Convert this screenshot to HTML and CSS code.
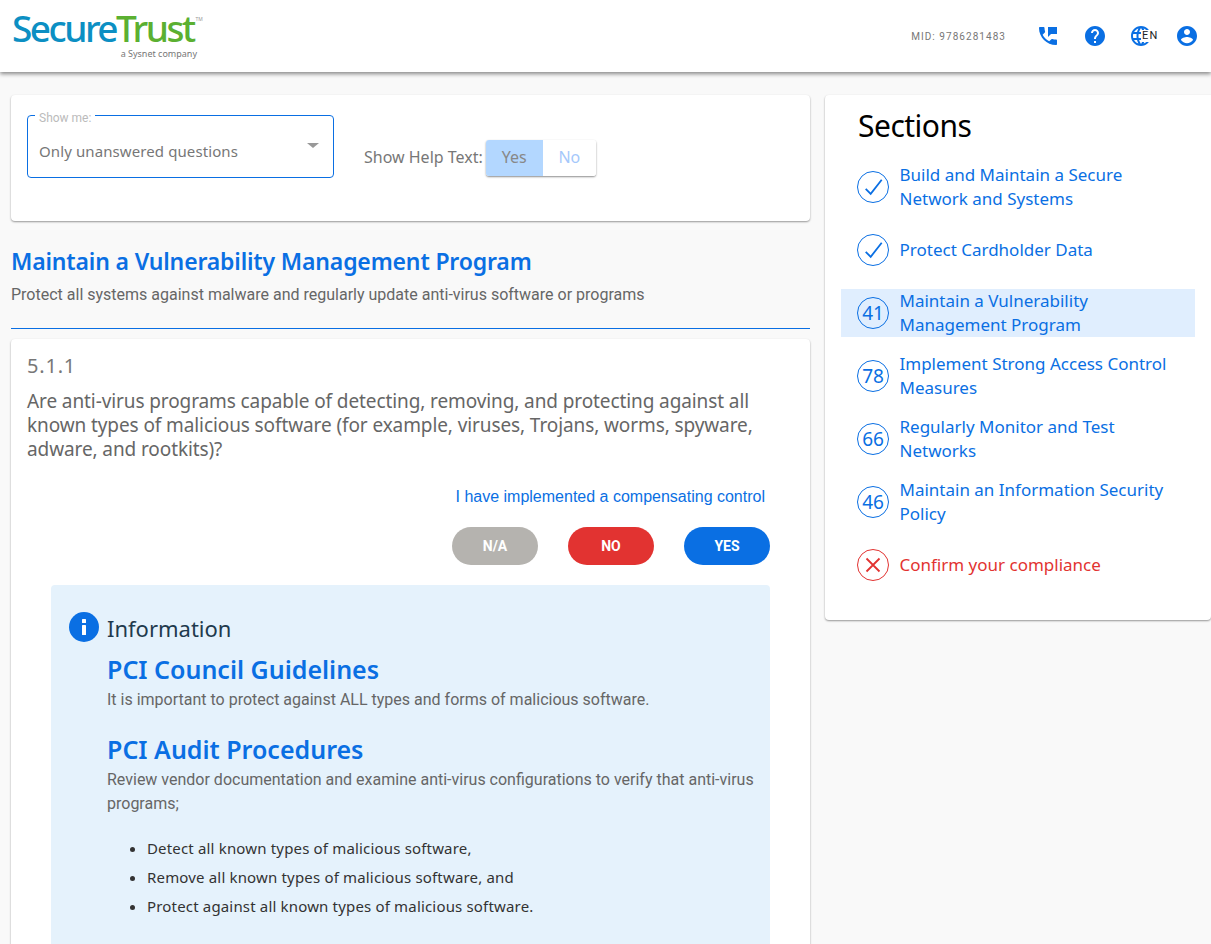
FILE: index.html
```html
<!DOCTYPE html>
<html lang="en">
<head>
<meta charset="utf-8">
<title>SecureTrust</title>
<link rel="stylesheet" href="styles.css">
</head>
<body>
<header class="topbar">
  <div class="logo">
    <div class="logo-word"><span class="logo-a">Secure</span><span class="logo-b">Trust</span><span class="logo-tm">TM</span></div>
    <div class="logo-sub">a Sysnet company</div>
  </div>
  <div class="top-actions">
    <span class="mid">MID: 9786281483</span>
    <svg class="ticon" viewBox="0 0 24 24"><path d="M20 15.5c-1.25 0-2.45-.2-3.57-.57-.35-.11-.74-.03-1.02.24l-2.2 2.2c-2.83-1.44-5.15-3.75-6.59-6.58l2.2-2.21c.28-.27.36-.66.25-1.01C8.7 6.45 8.5 5.25 8.5 4c0-.55-.45-1-1-1H4c-.55 0-1 .45-1 1 0 9.39 7.61 17 17 17 .55 0 1-.45 1-1v-3.5c0-.55-.45-1-1-1zM12 3v10l3-3h6V3h-9z"/></svg>
    <svg class="ticon ticon-tight" viewBox="0 0 24 24"><path d="M12 2C6.48 2 2 6.48 2 12s4.48 10 10 10 10-4.48 10-10S17.52 2 12 2zm1 17h-2v-2h2v2zm2.07-7.75l-.9.92C13.45 12.9 13 13.5 13 15h-2v-.5c0-1.1.45-2.1 1.17-2.83l1.24-1.26c.37-.36.59-.86.59-1.41 0-1.1-.9-2-2-2s-2 .9-2 2H8c0-2.21 1.79-4 4-4s4 1.79 4 4c0 .88-.36 1.68-.93 2.25z"/></svg>
    <div class="lang">
      <svg class="ticon" viewBox="0 0 24 24"><path d="M11.99 2C6.47 2 2 6.48 2 12s4.47 10 9.99 10C17.52 22 22 17.52 22 12S17.52 2 11.99 2zm6.93 6h-2.95c-.32-1.25-.78-2.45-1.38-3.56 1.84.63 3.37 1.91 4.33 3.56zM12 4.04c.83 1.2 1.48 2.53 1.91 3.96h-3.82c.43-1.43 1.08-2.76 1.91-3.96zM4.26 14C4.1 13.36 4 12.69 4 12s.1-1.36.26-2h3.38c-.08.66-.14 1.32-.14 2 0 .68.06 1.34.14 2H4.26zm.82 2h2.95c.32 1.25.78 2.45 1.38 3.56-1.84-.63-3.37-1.9-4.33-3.56zm2.95-8H5.08c.96-1.66 2.49-2.93 4.33-3.56C8.81 5.55 8.35 6.75 8.03 8zM12 19.96c-.83-1.2-1.48-2.53-1.91-3.96h3.82c-.43 1.43-1.08 2.76-1.91 3.96zM14.34 14H9.66c-.09-.66-.16-1.32-.16-2 0-.68.07-1.35.16-2h4.68c.09.65.16 1.32.16 2 0 .68-.07 1.34-.16 2zm.25 5.56c.6-1.11 1.06-2.31 1.38-3.56h2.95c-.96 1.65-2.49 2.93-4.33 3.56zM16.36 14c.08-.66.14-1.32.14-2 0-.68-.06-1.34-.14-2h3.38c.16.64.26 1.31.26 2s-.1 1.36-.26 2h-3.38z"/></svg>
      <span class="lang-code">EN</span>
    </div>
    <svg class="ticon" viewBox="0 0 24 24"><path d="M12 2C6.48 2 2 6.48 2 12s4.48 10 10 10 10-4.48 10-10S17.52 2 12 2zm0 3c1.66 0 3 1.34 3 3s-1.34 3-3 3-3-1.34-3-3 1.34-3 3-3zm0 14.2c-2.5 0-4.71-1.28-6-3.22.03-1.99 4-3.08 6-3.08 1.99 0 5.97 1.09 6 3.08-1.29 1.94-3.5 3.22-6 3.22z"/></svg>
  </div>
</header>

<main class="layout">
  <section class="col-left">
    <div class="card filter-card">
      <div class="select">
        <span class="select-label">Show me:</span>
        <span class="select-value">Only unanswered questions</span>
        <span class="select-arrow"></span>
      </div>
      <div class="help-toggle">
        <span class="help-label">Show Help Text:</span>
        <div class="toggle">
          <span class="toggle-on">Yes</span>
          <span class="toggle-off">No</span>
        </div>
      </div>
    </div>

    <h1 class="page-title">Maintain a Vulnerability Management Program</h1>
    <p class="page-sub">Protect all systems against malware and regularly update anti-virus software or programs</p>
    <hr class="rule">

    <article class="card question">
      <div class="q-num">5.1.1</div>
      <p class="q-text">Are anti-virus programs capable of detecting, removing, and protecting against all known types of malicious software (for example, viruses, Trojans, worms, spyware, adware, and rootkits)?</p>
      <div class="q-comp"><a class="comp-link">I have implemented a compensating control</a></div>
      <div class="q-buttons">
        <button class="btn btn-na">N/A</button>
        <button class="btn btn-no">NO</button>
        <button class="btn btn-yes">YES</button>
      </div>
      <div class="info">
        <div class="info-head">
          <svg class="info-icon" viewBox="0 0 30 30"><circle cx="15" cy="15" r="15"/><rect class="info-glyph" x="13" y="7" width="4" height="4" rx=".6"/><rect class="info-glyph" x="13" y="13" width="4" height="10" rx=".6"/></svg>
          <span class="info-title">Information</span>
        </div>
        <div class="info-body">
          <h2 class="info-h">PCI Council Guidelines</h2>
          <p class="info-p">It is important to protect against ALL types and forms of malicious software.</p>
          <h2 class="info-h info-h2">PCI Audit Procedures</h2>
          <p class="info-p">Review vendor documentation and examine anti-virus configurations to verify that anti-virus programs;</p>
          <ul class="info-list">
            <li>Detect all known types of malicious software,</li>
            <li>Remove all known types of malicious software, and</li>
            <li>Protect against all known types of malicious software.</li>
          </ul>
        </div>
      </div>
    </article>
  </section>

  <aside class="card sections">
    <h2 class="sections-title">Sections</h2>
    <ul class="nav">
      <li class="nav-item"><span class="badge"><svg class="mark" viewBox="0 0 32 32"><path d="M8.7 17.8l5 5 11-14"/></svg></span><span class="nav-text">Build and Maintain a Secure Network and Systems</span></li>
      <li class="nav-item"><span class="badge"><svg class="mark" viewBox="0 0 32 32"><path d="M8.7 17.8l5 5 11-14"/></svg></span><span class="nav-text">Protect Cardholder Data</span></li>
      <li class="nav-item active"><span class="badge">41</span><span class="nav-text">Maintain a Vulnerability Management Program</span></li>
      <li class="nav-item"><span class="badge">78</span><span class="nav-text">Implement Strong Access Control Measures</span></li>
      <li class="nav-item"><span class="badge">66</span><span class="nav-text">Regularly Monitor and Test Networks</span></li>
      <li class="nav-item"><span class="badge">46</span><span class="nav-text">Maintain an Information Security Policy</span></li>
      <li class="nav-item danger"><span class="badge"><svg class="mark" viewBox="0 0 32 32"><path d="M9.5 9.5l13 13M22.5 9.5l-13 13"/></svg></span><span class="nav-text">Confirm your compliance</span></li>
    </ul>
  </aside>
</main>
</body>
</html>
```
FILE: styles.css
```css
* { box-sizing: border-box; }
html, body { margin: 0; height: 100%; overflow: hidden; }
body {
  background: #f9f9f9;
  font-family: "Noto Sans", sans-serif;
  color: #666;
}
h1, h2, p, ul { margin: 0; }

.topbar {
  height: 72px;
  background: #fff;
  box-shadow: 0 2px 4px rgba(0,0,0,.45);
  display: flex;
  justify-content: space-between;
  align-items: flex-start;
  padding-left: 12px;
  padding-right: 12px;
  position: relative;
}
.logo { width: 190px; padding-top: 10px; }
.logo-word {
  font-family: "Noto Sans", sans-serif;
  font-size: 37px;
  font-weight: 500;
  line-height: 36px;
  letter-spacing: -2.5px;
  white-space: nowrap;
  display: flex;
}
.logo-a { color: #0c8fc3; }
.logo-b { color: #5bb031; }
.logo-tm { font-size: 5px; font-weight: 400; line-height: 18px; letter-spacing: 0; color: #999; margin-left: 2px; }
.logo-sub {
  font-family: "Noto Sans", sans-serif;
  font-size: 9px;
  line-height: 10px;
  color: #777;
  text-align: right;
  margin-top: 3px;
  padding-right: 5px;
}
.top-actions { display: flex; align-items: center; height: 72px; }
.mid {
  font-family: Roboto, sans-serif;
  font-size: 10px;
  letter-spacing: 1.05px;
  color: #777;
  margin-right: 30px;
}
.ticon { width: 24px; height: 24px; fill: #0a6fe3; display: block; margin-right: 23px; }
.ticon:last-child { margin-right: 0; }
.ticon-tight { margin-right: 22px; }
.lang { display: flex; align-items: center; width: 24px; margin-right: 22px; position: relative; }
.lang .ticon { margin-right: 0; }
.lang-code {
  position: absolute;
  left: 12px;
  top: 6px;
  background: #fff;
  font-family: Roboto, sans-serif;
  font-size: 11px;
  line-height: 12px;
  letter-spacing: 1.3px;
  color: #222;
  padding-left: 1px;
}

.layout {
  display: grid;
  grid-template-columns: 799px 386px;
  column-gap: 15px;
  padding: 23px 0 0 11px;
  align-items: start;
}
.card {
  background: #fff;
  border-radius: 4px;
  box-shadow: 0 1px 2px rgba(0,0,0,.4);
}
.filter-card {
  height: 126px;
  padding: 20px 16px;
  display: flex;
  align-items: flex-start;
}
.select {
  width: 307px;
  height: 63px;
  border: 1px solid #0a6fe3;
  border-radius: 4px;
  display: flex;
  align-items: center;
  justify-content: space-between;
  padding: 9px 14px 0 11px;
  position: relative;
}
.select-label {
  position: absolute;
  left: 7px;
  top: -5px;
  background: #fff;
  padding: 0 4px;
  font-family: Roboto, sans-serif;
  font-size: 12px;
  line-height: 14px;
  color: #bbb;
}
.select-value { font-size: 15px; color: #777; letter-spacing: .1px; }
.select-arrow {
  width: 0;
  height: 0;
  border-left: 6px solid transparent;
  border-right: 6px solid transparent;
  border-top: 5px solid #999;
  margin-top: -11px;
}
.help-toggle { display: flex; align-items: center; margin: 25px 0 0 30px; }
.help-label { font-size: 16px; color: #777; margin-right: 3px; line-height: 34px; margin-top: -2px; }
.toggle {
  display: flex;
  width: 110px;
  height: 36px;
  border-radius: 3px;
  overflow: hidden;
  box-shadow: 0 1px 2px rgba(0,0,0,.45);
  font-size: 16px;
  line-height: 34px;
  text-align: center;
}
.toggle-on { width: 57px; background: #b3d7ff; color: #888; }
.toggle-off { flex: 1; background: #fff; color: #a5c8fb; }

.page-title {
  font-size: 23px;
  font-weight: 600;
  line-height: 32px;
  letter-spacing: -.16px;
  color: #0a6fe3;
  margin-top: 24px;
}
.page-sub {
  font-family: Roboto, sans-serif;
  font-size: 16px;
  line-height: 24px;
  color: #666;
  margin-top: 6px;
}
.rule { border: 0; border-top: 1px solid #0a6fe3; margin: 21px 0 10px; }

.question { padding: 14px 40px 40px 16px; }
.q-num { font-size: 20px; line-height: 26px; letter-spacing: .8px; color: #777; }
.q-text { font-size: 19px; line-height: 24px; letter-spacing: -.1px; color: #666; margin-top: 10px; width: 745px; }
.q-comp { text-align: right; margin-top: 24px; padding-right: 5px; }
.comp-link { font-family: "Liberation Sans", sans-serif; font-size: 16px; line-height: 24px; color: #0a6fe3; }
.q-buttons { display: flex; justify-content: flex-end; gap: 30px; margin-top: 18px; }
.btn {
  width: 86px;
  height: 38px;
  border: 0;
  border-radius: 19px;
  color: #fff;
  font-family: Roboto, sans-serif;
  font-size: 14px;
  font-weight: 700;
  padding: 0;
}
.btn-na { background: #b5b3af; }
.btn-no { background: #e23331; }
.btn-yes { background: #0a6fe3; }

.info {
  margin: 20px 0 0 24px;
  width: 719px;
  background: #e5f2fc;
  border-radius: 4px;
  padding: 27px 16px 40px 18px;
  height: 500px;
}
.info-head { display: flex; align-items: center; gap: 8px; height: 30px; }
.info-icon { width: 30px; height: 30px; fill: #0a6fe3; }
.info-glyph { fill: #fff; }
.info-title { font-size: 22px; line-height: 30px; color: #1f3a4d; padding-top: 2px; }
.info-body { padding-left: 38px; }
.info-h { font-size: 25px; font-weight: 600; line-height: 34px; color: #0a6fe3; margin-top: 10px; }
.info-h2 { margin-top: 20px; }
.info-p { font-family: Roboto, sans-serif; font-size: 16px; line-height: 24px; color: #666; margin-top: 2px; }
.info-list { padding-left: 40px; margin-top: 18px; font-size: 15px; line-height: 29px; letter-spacing: .17px; color: #333; }

.sections { height: 525px; padding: 14px 16px 0 16px; border-top-right-radius: 0; }
.sections-title {
  font-size: 30px;
  font-weight: 400;
  line-height: 34px;
  letter-spacing: -.5px;
  color: #000;
  padding-left: 17px;
}
.nav { list-style: none; padding: 0; margin-top: 20px; display: flex; flex-direction: column; gap: 15px; }
.nav-item {
  min-height: 48px;
  width: 354px;
  display: flex;
  align-items: center;
  gap: 10.5px;
  padding-left: 16px;
  color: #0a6fe3;
  font-size: 17px;
  line-height: 24px;
}
.nav-item.active { background: #e0eefe; }
.nav-item.danger { color: #e23331; }
.badge {
  flex: none;
  width: 32px;
  height: 32px;
  border: 1px solid currentColor;
  border-radius: 50%;
  display: flex;
  align-items: center;
  justify-content: center;
  font-size: 19px;
}
.mark { width: 32px; height: 32px; fill: none; stroke: currentColor; stroke-width: 1.8; flex: none; }
.nav-text { width: 290px; }
```
